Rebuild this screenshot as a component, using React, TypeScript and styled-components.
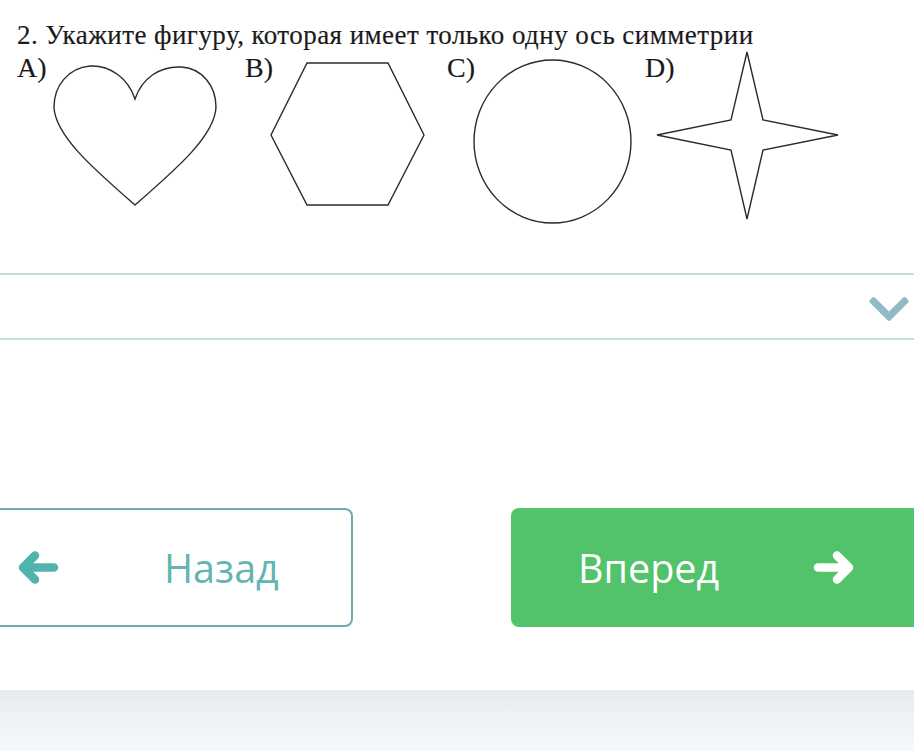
import React from 'react'
import styled, { createGlobalStyle } from 'styled-components'
import { FaChevronDown } from 'react-icons/fa'

const GlobalStyle = createGlobalStyle`
  html, body {
    margin: 0;
    padding: 0;
    background: #ffffff;
    overflow: hidden;
  }
  body {
    font-family: 'Open Sans', 'Noto Sans', sans-serif;
  }
`

type Figure = {
  label: string
  x: number
  width: number
  shape: React.ReactNode
}

const stroke = { fill: 'none', stroke: '#2b2b2b', strokeWidth: 1.4 }

const figures: Figure[] = [
  {
    label: 'A)',
    x: 17,
    width: 228,
    shape: (
      <path
        {...stroke}
        d="M135 99 C128 78 110 65 90 66 C68 68 54 86 54 107 C55 136 95 170 135 205 C175 170 215 136 216 107 C216 86 202 68 181 67 C160 66 142 78 135 99 Z"
      />
    ),
  },
  {
    label: 'B)',
    x: 245,
    width: 202,
    shape: (
      <polygon
        {...stroke}
        points="307,63 388,63 424,135 388,205 307,205 271,135"
      />
    ),
  },
  {
    label: 'C)',
    x: 447,
    width: 198,
    shape: <ellipse {...stroke} cx={552.5} cy={141.5} rx={78.5} ry={81.5} />,
  },
  {
    label: 'D)',
    x: 645,
    width: 269,
    shape: (
      <polygon
        {...stroke}
        points="747,52 763,120 838,135 763,150 747,219 731,150 657,135 731,120"
      />
    ),
  },
]

const LABEL_WIDTH = 26
const ROW_TOP = 50
const ROW_HEIGHT = 180

// bold arrow with rounded ends, as in the nav buttons
const Arrow = ({ dir }: { dir: 'left' | 'right' }) => (
  <ArrowIcon viewBox="0 0 41 33" width={41} height={33}>
    <path
      d={dir === 'left' ? 'M17 4.5 L5 16.5 L17 28.5 M5 16.5 L36 16.5' : 'M24 4.5 L36 16.5 L24 28.5 M36 16.5 L5 16.5'}
      fill="none"
      stroke="currentColor"
      strokeWidth={8.5}
      strokeLinecap="round"
      strokeLinejoin="round"
    />
  </ArrowIcon>
)

export default function App() {
  return (
    <Page>
      <GlobalStyle />
      <Question>
        <Heading>2. Укажите фигуру, которая имеет только одну ось симметрии</Heading>
        <FigureRow>
          {figures.map(f => {
            const svgX = f.x + LABEL_WIDTH
            const svgW = f.width - LABEL_WIDTH
            return (
              <Option key={f.label} $width={f.width}>
                <OptionLabel>{f.label}</OptionLabel>
                <Shape
                  width={svgW}
                  height={ROW_HEIGHT}
                  viewBox={`${svgX} ${ROW_TOP} ${svgW} ${ROW_HEIGHT}`}
                >
                  {f.shape}
                </Shape>
              </Option>
            )
          })}
        </FigureRow>
      </Question>

      <AnswerSelect>
        <FaChevronDown size={46} />
      </AnswerSelect>

      <Buttons>
        <BackButton>
          <Arrow dir="left" />
          <span>Назад</span>
        </BackButton>
        <NextButton>
          <span>Вперед</span>
          <Arrow dir="right" />
        </NextButton>
      </Buttons>

      <Footer />
    </Page>
  )
}

const Page = styled.div`
  width: 914px;
  min-height: 751px;
  display: flex;
  flex-direction: column;
  overflow: hidden;
`

const Question = styled.div`
  padding: 21px 0 0 17px;
  font-family: 'Liberation Serif', 'Times New Roman', serif;
  color: #1a1a1a;
`

const Heading = styled.div`
  font-size: 27px;
  line-height: 29px;
  letter-spacing: 0.45px;
  white-space: nowrap;
  -webkit-text-stroke: 0.15px #1a1a1a;
`

const FigureRow = styled.div`
  display: flex;
  height: ${ROW_HEIGHT}px;
`

const Option = styled.div<{ $width: number }>`
  display: flex;
  align-items: flex-start;
  width: ${p => p.$width}px;
  flex: none;
`

const OptionLabel = styled.div`
  width: ${LABEL_WIDTH}px;
  flex: none;
  font-size: 28px;
  line-height: 30px;
  padding-top: 3px;
  white-space: nowrap;
  -webkit-text-stroke: 0.15px #1a1a1a;
`

const Shape = styled.svg`
  display: block;
  overflow: visible;
  flex: none;
`

const AnswerSelect = styled.div`
  margin-top: 43px;
  height: 63px;
  border-top: 2px solid #c9dbda;
  border-bottom: 2px solid #c9dbda;
  display: flex;
  align-items: center;
  justify-content: flex-end;
  padding-right: 2px;
  color: #8fbac6;

  svg {
    margin-top: 4px;
  }
`

const ArrowIcon = styled.svg`
  display: block;
  flex: none;
`

const Buttons = styled.div`
  display: flex;
  gap: 158px;
  margin: 168px -30px 0 -30px;
`

const BaseButton = styled.button`
  height: 119px;
  box-sizing: border-box;
  border-radius: 8px;
  display: flex;
  align-items: center;
  font-family: 'Open Sans', 'Noto Sans', sans-serif;
  font-size: 39.5px;
  cursor: pointer;
  padding: 0;
`

const BackButton = styled(BaseButton)`
  width: 383px;
  background: #ffffff;
  border: 2px solid #6eaaae;
  color: #63b4b2;
  padding-left: 46px;

  ${ArrowIcon} {
    color: #50b3ae;
    margin-right: 105px;
  }
`

const NextButton = styled(BaseButton)`
  flex: 1;
  background: #52c26b;
  border: none;
  color: #ffffff;
  padding-left: 67px;

  ${ArrowIcon} {
    margin-left: 94px;
  }
`

const Footer = styled.div`
  margin-top: 63px;
  flex: 1;
  min-height: 61px;
  background: linear-gradient(#e7e9eb 0%, #eff2f5 40%, #f5f8fb 100%);
`
